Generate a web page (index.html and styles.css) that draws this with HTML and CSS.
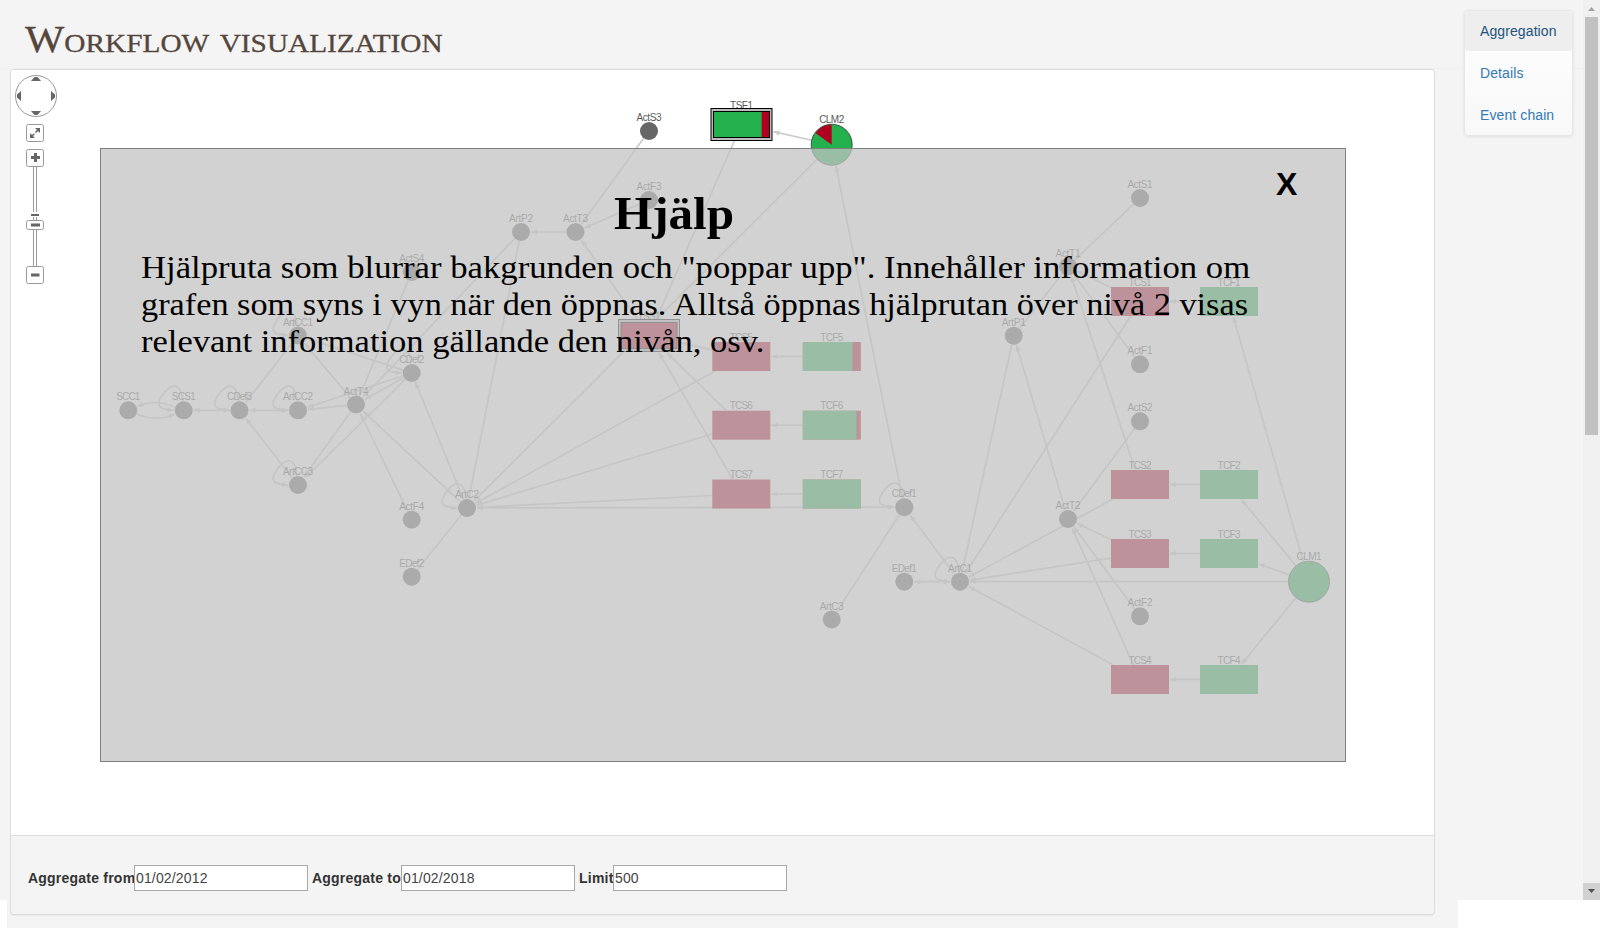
FILE: index.html
```html
<!DOCTYPE html>
<html lang="sv">
<head>
<meta charset="utf-8">
<title>Workflow visualization</title>
<link rel="stylesheet" href="styles.css">
</head>
<body>
<div class="page">
  <div class="viewport">
    <header class="header"><h1 class="title">Workflow visualization</h1></header>
    <nav class="side-nav">
      <a class="side-link active">Aggregation</a>
      <a class="side-link">Details</a>
      <a class="side-link">Event chain</a>
    </nav>
    <div class="scrollbar">
      <svg class="scroll-btn" viewBox="0 0 17 17"><path d="M5 11h7L8.500 7z" fill="#a3a3a3"/></svg>
      <div class="scroll-thumb"></div>
      <svg class="scroll-btn down" viewBox="0 0 17 17"><path d="M5 6h7L8.500 10z" fill="#505050"/></svg>
    </div>
  </div>
  <main class="panel">
    <div class="canvas">
      <svg class="graph" id="graph" viewBox="11 70 1423 765" width="1423" height="765"></svg>
      <svg class="panzoom" viewBox="11 70 60 220" width="60" height="220">
        <g fill="#fff" stroke="#999">
          <circle cx="36" cy="96" r="20.500"/>
          <path d="M33.500 167v99M36.500 167v99"/>
          <rect x="26.500" y="124.500" width="17" height="17" rx="2"/>
          <rect x="26.500" y="149.500" width="17" height="17" rx="2"/>
          <rect x="26.500" y="266.500" width="17" height="17" rx="2"/>
          <rect x="26.500" y="220.500" width="17" height="9" rx="2"/>
        </g>
        <path d="M29.500 212h11v5h-11z" fill="#fff"/>
        <g fill="#666">
          <path d="M31 81h10l-3.500-4h-3zM31 111h10l-3.500 4h-3zM21 91v10l-4-3.500v-3zM51 91v10l4-3.500v-3z"/>
          <path d="M31 156h3v-3h3v3h3v3h-3v3h-3v-3h-3zM31 273.500h8.500v3H31zM31 223.500h9v3h-9zM31 214h8v2h-8z"/>
          <path d="M40 128v5l-5-5zM30 138v-5l5 5z"/>
        </g>
        <path d="M32 136l6-6" stroke="#666" stroke-width="1.500" stroke-dasharray="3.300 1.600"/>
      </svg>
      <section class="help">
        <button class="help-close">X</button>
        <h2 class="help-title">Hjälp</h2>
        <p class="help-text"><span class="l1">Hjälpruta som blurrar bakgrunden och "poppar upp". Innehåller information om</span><span class="l2">grafen som syns i vyn när den öppnas. Alltså öppnas hjälprutan över nivå 2 visas</span><span class="l3">relevant information gällande den nivån, osv.</span></p>
      </section>
    </div>
    <form class="filters">
      <label class="from">Aggregate from</label><input value="01/02/2012">
      <label class="to">Aggregate to</label><input value="01/02/2018">
      <label class="limit">Limit</label><input value="500">
    </form>
  </main>
</div>
<script src="graph.js"></script>
</body>
</html>
```
FILE: styles.css
```css
* { box-sizing: border-box; }
body {
  margin: 0;
  background: #fff;
  font-family: "Liberation Sans", Arial, sans-serif;
  font-size: 14px;
  color: #333;
  overflow: hidden;
}
.page {
  position: relative;
  width: 1600px;
  height: 928px;
  padding: 69px 0 0 10px;
  background: linear-gradient(#f4f4f4, #f4f4f4) 7px 900px / 1451px 28px no-repeat;
}
.viewport {
  position: absolute;
  inset: 0 0 auto 0;
  height: 900px;
  background: #f4f4f4;
}
.header {
  height: 69px;
  width: 1583px;
  padding: 17px 0 0 25px;
  border-bottom: 1px solid #eee;
}
.title {
  margin: 0;
  width: max-content;
  font: 400 37px/46px "Liberation Serif", serif;
  font-variant: small-caps;
  color: #54463c;
  white-space: nowrap;
  transform: scaleX(1.127);
  transform-origin: left;
  -webkit-text-stroke: .3px #54463c;
}
.side-nav {
  position: absolute;
  top: 10px;
  left: 1464px;
  width: 109px;
  height: 126px;
  display: flex;
  flex-direction: column;
  gap: 2px;
  border: 1px solid #e7e7e7;
  border-radius: 4px;
  background: linear-gradient(#fff, #f8f8f8);
  box-shadow: 0 1px 3px rgba(0, 0, 0, .09);
}
.side-link {
  height: 40px;
  padding: 0 15px;
  line-height: 40px;
  border-radius: 4px;
  color: #337ab7;
  white-space: nowrap;
  letter-spacing: .1px;
}
.side-link.active { background: #eee; color: #23527c; }
.scrollbar {
  position: absolute;
  top: 0;
  right: 0;
  width: 17px;
  height: 900px;
  display: flex;
  flex-direction: column;
  background: #f0f0f0;
}
.scroll-btn { width: 17px; height: 17px; }
.scroll-btn.down { margin-top: auto; background: #d1d1d1; }
.scroll-thumb { width: 13px; height: 418px; margin-left: 2px; background: #c1c1c1; }
.panel {
  position: relative;
  width: 1425px;
  height: 846px;
  border: 1px solid #ddd;
  border-radius: 4px;
  background: #f4f4f4;
  box-shadow: 0 1px 1px rgba(0, 0, 0, .05);
}
.canvas {
  position: relative;
  height: 765px;
  background: #fff;
  border-radius: 3px 3px 0 0;
}
.graph { display: block; }
.graph text { font: 10px "Liberation Sans", Arial, sans-serif; fill: #5a5a5a; text-anchor: middle; }
.panzoom { position: absolute; top: 0; left: 0; }
.help {
  position: absolute;
  left: 89px;
  top: 78px;
  width: 1246px;
  height: 614px;
  padding: 31px 0 0 40px;
  border: 1px solid #7f7f7f;
  background: rgba(195, 195, 195, .75);
  color: #000;
}
.help-title {
  margin: 0 138px 0 0;
  text-align: center;
  font: 700 47px/66px "Liberation Serif", serif;
  transform: scaleX(1.045);
}
.help-close {
  position: absolute;
  top: 15px;
  left: 1175px;
  padding: 0;
  border: 0;
  background: none;
  color: #000;
  font: 700 32px/40px "Liberation Sans", Arial, sans-serif;
}
.help-text {
  margin: 3px 0 0;
  font: 32px/37px "Liberation Serif", serif;
  display: flex;
  flex-direction: column;
  align-items: flex-start;
  white-space: nowrap;
}
.help-text span { transform-origin: left; }
.help-text .l1 { transform: scaleX(1.084); }
.help-text .l2 { transform: scaleX(1.071); }
.help-text .l3 { transform: scaleX(1.078); }
.filters {
  display: flex;
  align-items: center;
  height: 79px;
  padding: 5px 0 0 17px;
  border-top: 1px solid #ddd;
}
.filters label { font-weight: 700; white-space: nowrap; letter-spacing: .22px; }
.filters .from { width: 106px; }
.filters .to { width: 89px; }
.filters .limit { width: 34px; }
.filters input {
  width: 174px;
  height: 26px;
  margin-right: 4px;
  padding: 1px;
  border: 1px solid #a9a9a9;
  background: #fff;
  color: #444;
  letter-spacing: .15px;
  font: 14px "Liberation Sans", Arial, sans-serif;
}
```
FILE: graph.js
```js
const dots = {
  ActS3: [649, 131], ActF3: [649, 200], ArtP2: [521, 232], ActT3: [575.5, 232],
  ActS4: [411.7, 272], ArtCC1: [298, 335.5], CDef2: [411.7, 373], SCC1: [128.3, 410.3],
  SCS1: [183.7, 410.3], CDef3: [239.5, 410.3], ArtCC2: [298, 410.3], ActT4: [356, 404.5],
  ArtCC3: [298, 485], ArtC2: [467, 508], ActF4: [411.7, 519.7], EDef2: [411.7, 576.7],
  CDef1: [904.3, 507.2], EDef1: [904.3, 581.7], ArtC1: [960, 581.7], ArtC3: [831.7, 619.5],
  ActT1: [1068, 266.5], ArtP1: [1013.7, 335.7], ActS1: [1140, 198], ActF1: [1140, 364.3],
  ActS2: [1140, 421.3], ActT2: [1068, 519], ActF2: [1140, 616.3]
};
/* cx, cy, share of green */
const boxes = {
  TSF1: [741.5, 124.5, .86], TSS1: [649, 335.5, 0],
  TCS5: [741.3, 356.5, 0], TCS6: [741.3, 425.2, 0], TCS7: [741.3, 494, 0],
  TCF5: [831.8, 356.5, .855], TCF6: [831.8, 425.2, .925], TCF7: [831.8, 494, 1],
  TCS1: [1140, 301.5, 0], TCS2: [1140, 484.5, 0], TCS3: [1140, 553.5, 0], TCS4: [1140, 679.5, 0],
  TCF1: [1229, 301.5, 1], TCF2: [1229, 484.5, 1], TCF3: [1229, 553.5, 1], TCF4: [1229, 679.5, 1]
};
const pies = { CLM2: [831.7, 144.7, .15], CLM1: [1309, 581.7, 0] };
const GREEN = '#22b14c', RED = '#b00020';

/* ">" one arrow, "=" arrows at both ends, "-" plain */
const edges = `ActS3>ActT3 ActF3>ActT3 ActT3>ArtP2 TSS1>ActT3 TSF1>TSS1 CLM2>TSF1 CLM2>ArtC2 CDef1>CLM2
ArtP2-ArtC2 ArtP2>ActT4 ActS4-ActT4 CDef2>ActT4 ArtC2>ActT4 ActF4>ActT4 ActT4>ArtCC1 ActT4>ArtCC2
ActT4>ArtCC3 CDef2>ArtCC1 CDef2>ArtCC2 CDef2>ArtCC3 ArtCC1>CDef3 ArtCC2=CDef3 ArtCC3>CDef3 CDef3=SCS1
ArtC2>CDef2 EDef2-ArtC2 TCS5>ArtC2 TCS6>ArtC2 TCS7>ArtC2 CDef1=ArtC2 TCS5>TSS1 TCS6>TSS1 TCS7>TSS1
TCF5>TCS5 TCF6>TCS6 TCF7>TCS7 TCF1>TCS1 TCF2>TCS2 TCF3>TCS3 TCF4>TCS4
ArtC1>CDef1 CDef1-ArtC3 ArtC1=EDef1 ArtP1-ArtC1 TCS1>ArtC1 TCS2>ArtC1 TCS3>ArtC1 TCS4>ArtC1 CLM1>ArtC1
ActT2>ArtP1 ActT1>ArtP1 ActS1>ActT1 ActF1>ActT1 TCS1>ActT1 TCS2>ActT1 ActS2>ActT2 TCS3>ActT2 TCS4>ActT2
ActF2>ActT2 CLM1>TCF1 CLM1>TCF2 CLM1>TCF3 CLM1>TCF4`.split(/\s+/);
const loops = ['ArtCC1', 'SCS1', 'CDef3', 'ArtCC2', 'CDef2', 'ArtCC3', 'ArtC2', 'CDef1', 'ArtC1'];

const at = id => dots[id] || boxes[id] || pies[id];

/* point on the border of node "id" in the direction of (x, y), gap px outside it */
function border(id, x, y, gap) {
  const [cx, cy] = at(id), dx = x - cx, dy = y - cy, len = Math.hypot(dx, dy);
  let r = dots[id] ? 9 : 20.5;
  if (boxes[id]) {
    const big = id.startsWith('TS') ? 2 : 0;
    r = Math.min((29 + big) * len / Math.abs(dx || 1e-6), (14.5 + big) * len / Math.abs(dy || 1e-6));
  }
  r += gap;
  return [cx + dx / len * r, cy + dy / len * r];
}
function head([x, y], [fx, fy]) {
  const a = Math.atan2(y - fy, x - fx) * 180 / Math.PI;
  return `<path transform="translate(${x} ${y}) rotate(${a})" d="M0 0L-6 -2.500L-6 2.500Z" fill="#ccc"/>`;
}
const line = d => `<path d="${d}" fill="none" stroke="#ccc" stroke-width="1.700"/>`;

let out = '';
for (const e of edges) {
  const [, s, k, t] = e.match(/(\w+)([>=-])(\w+)/);
  const a = border(s, at(t)[0], at(t)[1], k === '=' ? 1 : 0);
  const b = border(t, at(s)[0], at(s)[1], k === '-' ? 0 : 1);
  out += line(`M${a}L${b}`);
  if (k !== '-') out += head(b, a);
  if (k === '=') out += head(a, b);
}
for (const id of loops) {
  const [x, y] = at(id);
  out += line(`M${x - 1} ${y - 9}C${x - 3} ${y - 32} ${x - 15} ${y - 25} ${x - 22} ${y - 14}S${x - 23} ${y - 1} ${x - 10} ${y}`);
  out += head([x - 10, y], [x - 20, y - .5]);
}
out += line('M174.500 407Q156 399 138 406') + head([137, 406.5], [150, 402]);
out += line('M137 414Q156 422 174 415') + head([175, 414.500], [162, 418]);

const label = (id, x, y) => `<text x="${x}" y="${y}" textLength="${({ A: 25, C: 25, S: 24, E: 25, T: 23 })[id[0]] + (id.startsWith('ArtCC') ? 5 : id.startsWith('ArtP') || id.startsWith('ArtC') ? -1 : 0)}">${id}</text>`;
for (const id in dots) {
  const [x, y] = dots[id];
  out += `<circle cx="${x}" cy="${y}" r="9" fill="#666"/>` + label(id, x, y - 10);
}
for (const id in pies) {
  const [x, y, f] = pies[id], t = f * 2 * Math.PI;
  out += `<circle cx="${x}" cy="${y}" r="20.500" fill="${GREEN}" stroke="#333" stroke-width=".8"/>`;
  if (f) out += `<path d="M${x} ${y}V${y - 20}A20 20 0 0 0 ${x - 20 * Math.sin(t)} ${y - 20 * Math.cos(t)}Z" fill="${RED}"/>`;
  out += label(id, x, y - 21.700);
}
for (const id in boxes) {
  const [x, y, f] = boxes[id];
  if (id.startsWith('TS')) {
    out += label(id, x, y - 16);
    out += `<rect x="${x - 30.500}" y="${y - 16}" width="61" height="32" fill="#bbb" stroke="#000"/>`;
    out += `<rect x="${x - 28}" y="${y - 13.500}" width="56" height="27" fill="${RED}"/>`;
    out += `<rect x="${x - 28}" y="${y - 13.500}" width="${56 * f}" height="27" fill="${GREEN}"/>`;
    out += `<rect x="${x - 28}" y="${y - 13}" width="56" height="26" fill="none" stroke="#000"/>`;
  } else {
    out += `<rect x="${x - 29}" y="${y - 14.500}" width="58" height="29" fill="${RED}"/>`;
    out += `<rect x="${x - 29}" y="${y - 14.500}" width="${58 * f}" height="29" fill="${GREEN}"/>`;
    out += label(id, x, y - 16);
  }
}
document.getElementById('graph').innerHTML = out;
```
